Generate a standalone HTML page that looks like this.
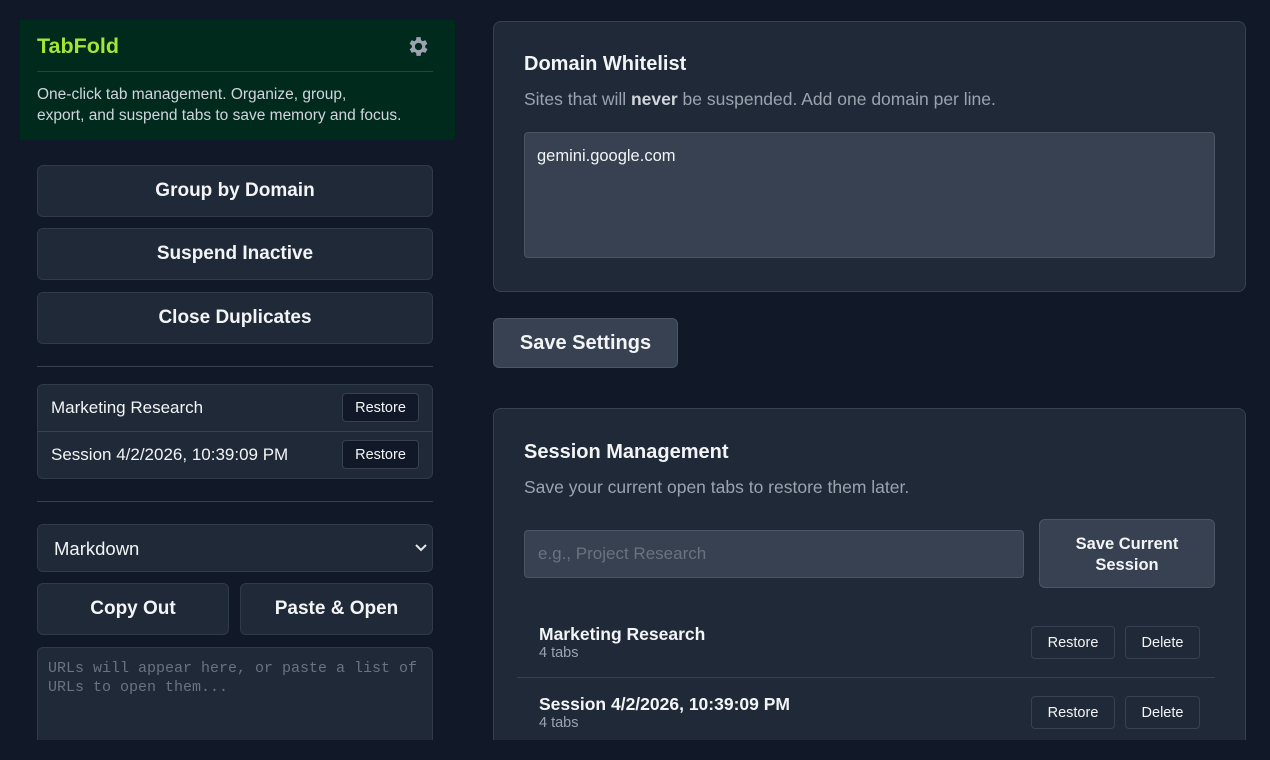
<!DOCTYPE html>
<html><head><style>
*{box-sizing:border-box;margin:0;padding:0}
body{width:1270px;height:760px;background:#111827;font-family:"Liberation Sans",sans-serif;color:#f3f4f6;position:relative;overflow:hidden}
.a{position:absolute}
.btn{position:absolute;background:#1f2937;border:1px solid #2f3a4a;border-radius:6px;display:flex;align-items:center;justify-content:center;font-weight:bold;font-size:19px;color:#f3f4f6}
.sm{position:absolute;border:1px solid #374151;border-radius:4px;display:flex;align-items:center;justify-content:center;font-size:14.5px;color:#f3f4f6}
.card{position:absolute;background:#1f2937;border:1px solid #374151;border-radius:8px}
</style></head><body>
<div class="a" style="left:20px;top:20px;width:435px;height:120px;background:#002a1c"></div>
<div class="a" style="left:37px;top:34px;font-size:21.5px;font-weight:bold;color:#a3e635">TabFold</div>
<svg class="a" style="left:405px;top:34px" width="25" height="25" viewBox="0 0 24 24"><path fill="#9ca3af" d="M19.4 13a7.5 7.5 0 0 0 0-2l2.1-1.6-2-3.5-2.5 1a7 7 0 0 0-1.7-1L15 3h-4l-.4 2.9a7 7 0 0 0-1.7 1l-2.5-1-2 3.5L6.6 11a7.5 7.5 0 0 0 0 2l-2.1 1.6 2 3.5 2.5-1a7 7 0 0 0 1.7 1L11 21h4l.4-2.9a7 7 0 0 0 1.7-1l2.5 1 2-3.5zM13 15.5a3.5 3.5 0 1 1 0-7 3.5 3.5 0 0 1 0 7z"/></svg>
<div class="a" style="left:37px;top:71px;width:396px;height:1px;background:#1f4d2a"></div>
<div class="a" style="left:37px;top:84px;font-size:15.5px;line-height:21px;color:#d1d5db">One-click tab management. Organize, group,<br>export, and suspend tabs to save memory and focus.</div>
<div class="btn" style="left:37px;top:165px;width:396px;height:52px">Group by Domain</div>
<div class="btn" style="left:37px;top:228px;width:396px;height:52px">Suspend Inactive</div>
<div class="btn" style="left:37px;top:292px;width:396px;height:52px">Close Duplicates</div>
<div class="a" style="left:37px;top:366px;width:396px;height:1px;background:#374151"></div>
<div class="card" style="left:37px;top:384px;width:396px;height:95px;border-radius:6px;border-color:#2f3a4a"></div>
<div class="a" style="left:38px;top:431px;width:394px;height:1px;background:#374151"></div>
<div class="a" style="left:51px;top:398px;font-size:17px">Marketing Research</div>
<div class="a" style="left:51px;top:445px;font-size:17px">Session 4/2/2026, 10:39:09 PM</div>
<div class="sm" style="left:342px;top:393px;width:77px;height:29px;background:#111827">Restore</div>
<div class="sm" style="left:342px;top:440px;width:77px;height:29px;background:#111827">Restore</div>
<div class="a" style="left:37px;top:501px;width:396px;height:1px;background:#374151"></div>
<div class="card" style="left:37px;top:524px;width:396px;height:48px;border-radius:6px;border-color:#2f3a4a"></div>
<div class="a" style="left:54px;top:538px;font-size:18.5px">Markdown</div>
<svg class="a" style="left:414px;top:542px" width="14" height="12" viewBox="0 0 14 12"><path d="M2 3l5 5 5-5" stroke="#e5e7eb" stroke-width="2" fill="none"/></svg>
<div class="btn" style="left:37px;top:583px;width:192px;height:52px">Copy Out</div>
<div class="btn" style="left:240px;top:583px;width:193px;height:52px">Paste &amp; Open</div>
<div class="a" style="left:37px;top:647px;width:396px;height:93px;background:#1f2937;border:1px solid #2f3a4a;border-bottom:none;border-radius:6px 6px 0 0"></div>
<div class="a" style="left:48px;top:659px;font-family:'Liberation Mono',monospace;font-size:15px;line-height:19px;color:#6b7280">URLs will appear here, or paste a list of<br>URLs to open them...</div>

<div class="card" style="left:493px;top:21px;width:753px;height:271px"></div>
<div class="a" style="left:524px;top:53px;font-size:20px;font-weight:bold">Domain Whitelist</div>
<div class="a" style="left:524px;top:89px;font-size:17.5px;color:#9ca3af">Sites that will <b style="color:#d1d5db">never</b> be suspended. Add one domain per line.</div>
<div class="a" style="left:524px;top:132px;width:691px;height:126px;background:#374151;border:1px solid #4b5563;border-radius:4px"></div>
<div class="a" style="left:537px;top:147px;font-size:16.5px">gemini.google.com</div>
<div class="btn" style="left:493px;top:318px;width:185px;height:50px;background:#374151;border-color:#4b5563;font-size:20px">Save Settings</div>

<div class="a" style="left:493px;top:408px;width:753px;height:332px;background:#1f2937;border:1px solid #374151;border-bottom:none;border-radius:8px 8px 0 0"></div>
<div class="a" style="left:524px;top:441px;font-size:20px;font-weight:bold">Session Management</div>
<div class="a" style="left:524px;top:477px;font-size:17.5px;color:#9ca3af">Save your current open tabs to restore them later.</div>
<div class="a" style="left:524px;top:530px;width:500px;height:48px;background:#374151;border:1px solid #4b5563;border-radius:4px"></div>
<div class="a" style="left:538px;top:544px;font-size:17px;color:#6b7280">e.g., Project Research</div>
<div class="a" style="left:1039px;top:519px;width:176px;height:69px;background:#374151;border:1px solid #4b5563;border-radius:6px;font-weight:bold;font-size:16.5px;text-align:center;padding-top:14px;line-height:21px">Save Current<br>Session</div>
<div class="a" style="left:539px;top:624px;font-size:17.5px;font-weight:bold">Marketing Research</div>
<div class="a" style="left:539px;top:645px;font-size:14.5px;color:#9ca3af">4 tabs</div>
<div class="sm" style="left:1031px;top:626px;width:84px;height:33px">Restore</div>
<div class="sm" style="left:1125px;top:626px;width:75px;height:33px">Delete</div>
<div class="a" style="left:517px;top:677px;width:698px;height:1px;background:#374151"></div>
<div class="a" style="left:539px;top:694px;font-size:17.5px;font-weight:bold">Session 4/2/2026, 10:39:09 PM</div>
<div class="a" style="left:539px;top:715px;font-size:14.5px;color:#9ca3af">4 tabs</div>
<div class="sm" style="left:1031px;top:696px;width:84px;height:33px">Restore</div>
<div class="sm" style="left:1125px;top:696px;width:75px;height:33px">Delete</div>
</body></html>
